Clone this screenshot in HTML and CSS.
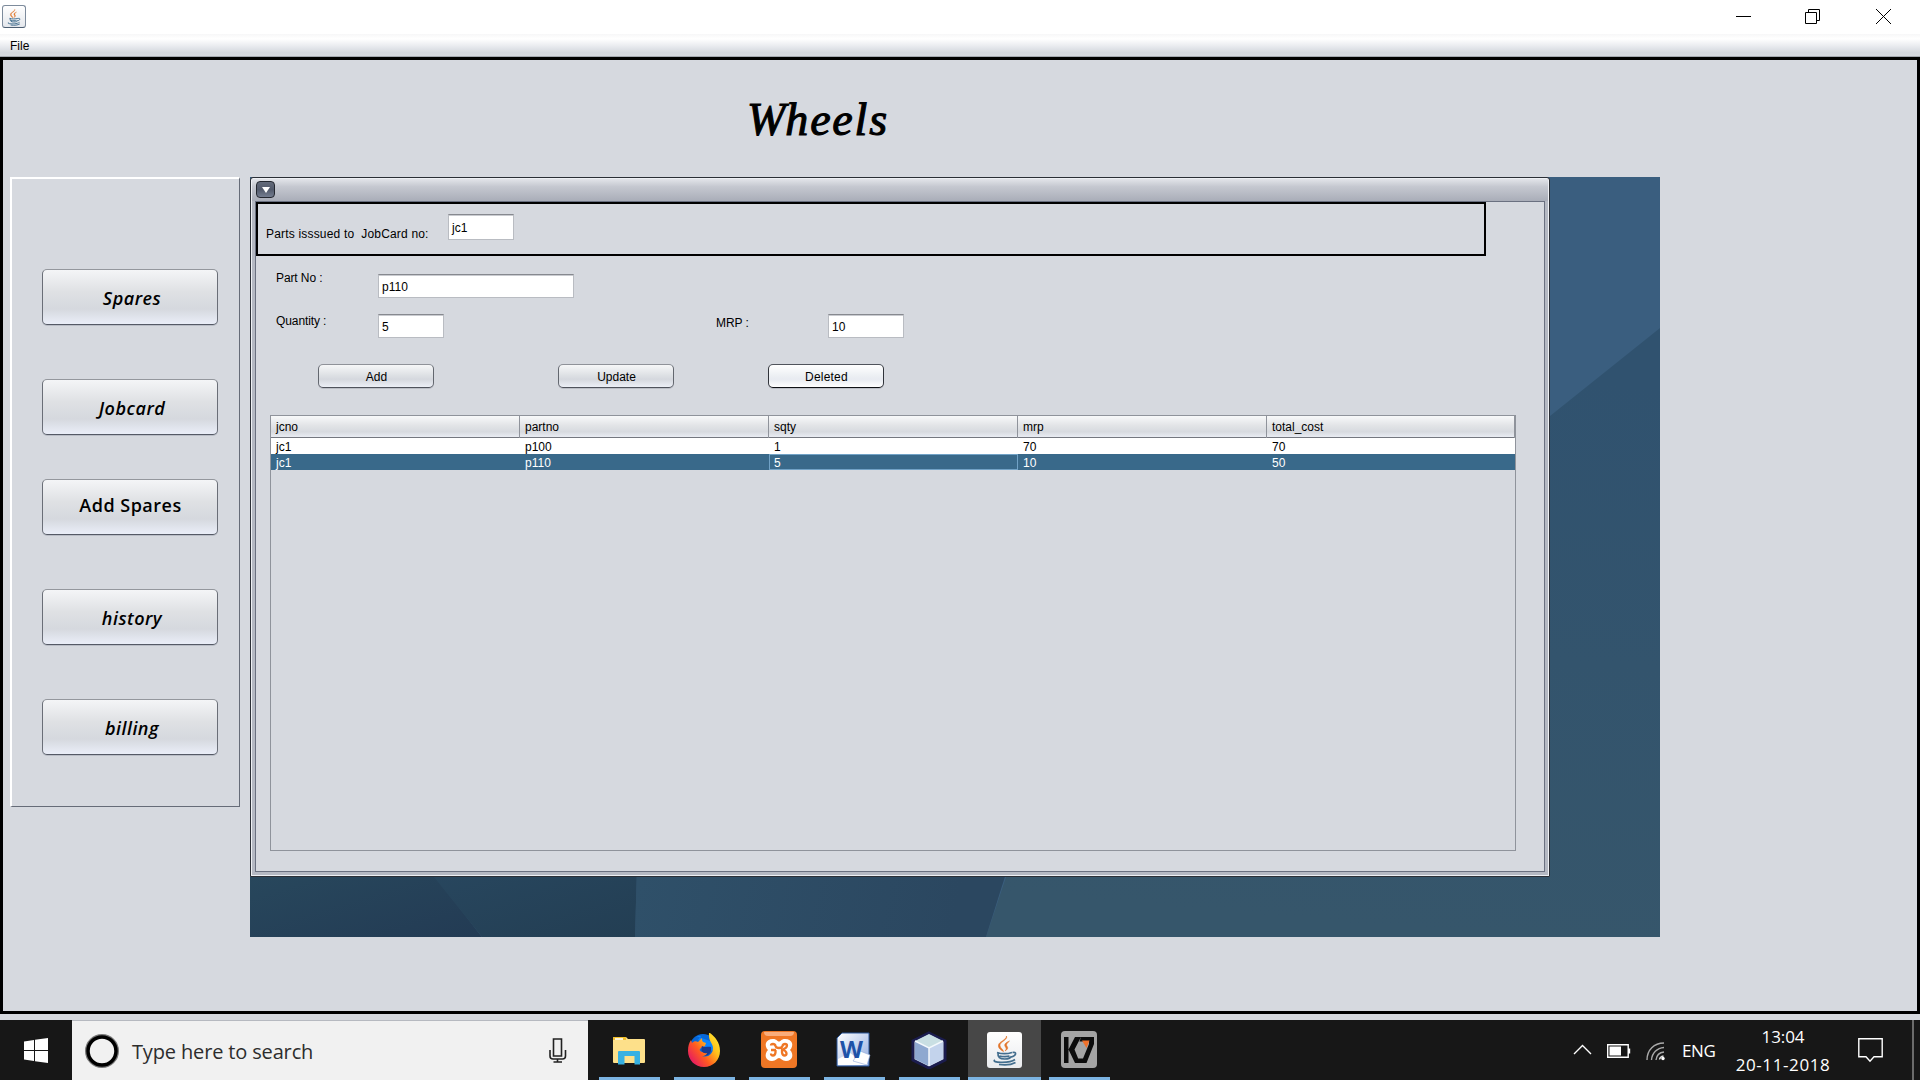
FILE: index.html
```html
<!DOCTYPE html>
<html lang="en">
<head>
<meta charset="utf-8">
<title>Wheels</title>
<link rel="stylesheet" href="styles.css">
</head>
<body>
<svg class="defs" width="0" height="0">
  <symbol id="java" viewBox="0 0 36 36">
    <path d="M19.500 4c1.500 4-7 6-6.500 9.500 0 2.500 3 3.500 3.500 6-3-1.500-5.500-3.500-5-6.500C12 9.500 19.500 8 19.500 4zM22.500 9c-5 2-5.500 4-4 6 1 1.500 1 2.500-.500 4 5-3 1.500-4.500 1.500-6 0-1.500 1.500-2.500 3-4z" fill="#e2762b" stroke="#e2762b" stroke-width=".6"/>
    <path d="M10 20.500c4 1.300 11 1.300 15 0M11 20.500c-.500 5 2 6.500 6.500 6.500s6.500-1 7-3M25.500 20.500c4-1 4.500 3-1 4.500M12.500 24c4 1 7 .8 10 .2M8 28c-5 2.500 14 4 20-.500M12 32.500c7 1 13 0 16.500-2" fill="none" stroke="#436e8e" stroke-width="1.700"/>
  </symbol>
</svg>

<header class="titlebar">
  <span class="appicon"><svg width="20" height="20"><use href="#java"/></svg></span>
  <div class="winbtns">
    <svg width="15" height="15" viewBox="0 0 15 15"><path d="M0 7.500h15"/></svg>
    <svg width="15" height="15" viewBox="0 0 15 15"><path d="M.5 3.500h11v11H.5zM3.500 3.500v-3h11v11h-3"/></svg>
    <svg width="15" height="15" viewBox="0 0 15 15"><path d="M0 0l15 15M15 0L0 15"/></svg>
  </div>
</header>
<nav class="menubar">File</nav>

<main class="app">
  <h1 class="brand"><span>W</span>heels</h1>
  <div class="workspace">
    <aside class="sidebar">
      <button class="nav">Spares</button>
      <button class="nav">Jobcard</button>
      <button class="nav upright">Add Spares</button>
      <button class="nav">history</button>
      <button class="nav">billing</button>
    </aside>
    <section class="desktop">
      <svg class="wall" width="1410" height="760" viewBox="0 0 1410 760">
        <defs>
          <linearGradient id="w1" x1="0" y1="0" x2="1" y2="1"><stop offset="0" stop-color="#28485d"/><stop offset="1" stop-color="#233b54"/></linearGradient>
          <linearGradient id="w2" x1="0" y1="0" x2="1" y2="1"><stop offset="0" stop-color="#28475f"/><stop offset="1" stop-color="#233e53"/></linearGradient>
          <linearGradient id="w3" gradientUnits="userSpaceOnUse" x1="390" y1="690" x2="700" y2="760"><stop offset="0" stop-color="#2f5069"/><stop offset="1" stop-color="#2b4760"/></linearGradient>
          <linearGradient id="w4" gradientUnits="userSpaceOnUse" x1="1300" y1="200" x2="1250" y2="760"><stop offset="0" stop-color="#30526f"/><stop offset="1" stop-color="#36566b"/></linearGradient>
        </defs>
        <path d="M0 0h1410v760H0z" fill="#3a5e7f"/>
        <path d="M1410 151v609H736l20-60 544-461z" fill="url(#w4)"/>
        <path d="M387 690h371l-22 70H385z" fill="url(#w3)"/>
        <path d="M0 690h178l54 70H0z" fill="url(#w1)"/>
        <path d="M176 690h211l-2 70H232z" fill="url(#w2)"/>
      </svg>
      <div class="frame">
        <div class="frame-title"><span class="sysmenu"></span></div>
        <div class="frame-body">
          <div class="jobcard">
            <label>Parts isssued to&nbsp; JobCard no:</label>
            <span class="field f-jc">jc1</span>
          </div>
          <div class="row r-part"><label>Part No :</label><span class="field f-part">p110</span></div>
          <div class="row r-qty">
            <label>Quantity :</label><span class="field f-qty">5</span>
            <label class="mrp">MRP :</label><span class="field f-mrp">10</span>
          </div>
          <div class="actions">
            <button class="btn">Add</button>
            <button class="btn">Update</button>
            <button class="btn hot">Deleted</button>
          </div>
          <div class="table">
            <div class="tr head"><span>jcno</span><span>partno</span><span>sqty</span><span>mrp</span><span>total_cost</span></div>
            <div class="tr"><span>jc1</span><span>p100</span><span>1</span><span>70</span><span>70</span></div>
            <div class="tr sel"><span>jc1</span><span>p110</span><span class="focus">5</span><span>10</span><span>50</span></div>
          </div>
        </div>
      </div>
    </section>
  </div>
</main>

<footer class="taskbar">
  <div class="start"><svg width="24" height="25" viewBox="0 0 24 25"><path d="M0 3.500L10 2v10H0zM11 1.800L24 0v12H11zM0 13h10v10L0 21.500zM11 13h13v12l-13-1.800z" fill="#fff"/></svg></div>
  <div class="search">
    <svg width="34" height="34" viewBox="0 0 34 34"><circle cx="17" cy="17" r="15" fill="none" stroke="#777" stroke-width="4"/><circle cx="17" cy="17" r="14" fill="none" stroke="#000" stroke-width="3.500"/></svg>
    <span>Type here to search</span>
    <svg class="mic" width="18" height="25" viewBox="0 0 18 25"><path d="M4.500 1h8v17h-8zM1 12v6q0 3 3 3h9.500q3 0 3-3v-6M8.500 21v3M4.500 24h8.500" fill="none" stroke="#222" stroke-width="1.600"/></svg>
  </div>
  <div class="tasks">
    <div class="task"><svg width="36" height="36" viewBox="0 0 36 36"><path d="M2 6q0-1 1-1h12l2 2h16q1 0 1 1v22q0 1-1 1H3q-1 0-1-1z" fill="#fde08a"/><path d="M2 6q0-1 1-1h12v3H2z" fill="#f2c12d"/><path d="M4 6.200h8v1.600H4z" fill="#fff"/><path d="M8 19h20q1 0 1 1v12.500h-5.500V24h-10v8.500H7V20q0-1 1-1z" fill="#37b1e2"/></svg></div>
    <div class="task"><svg width="36" height="36" viewBox="0 0 36 36"><defs><linearGradient id="fx" x1="1" y1="0" x2="0" y2=".8"><stop offset="0" stop-color="#fff13a"/><stop offset=".35" stop-color="#ffc21a"/><stop offset=".65" stop-color="#ff5b20"/><stop offset="1" stop-color="#e3126b"/></linearGradient></defs><circle cx="17" cy="15" r="13" fill="#0868d8"/><path d="M10 4l5 0-3 4 4 2-2 6 5 5 8-3V10z" fill="#0a84ff"/><path d="M24 1c5 4 10 9 10 18 0 9-7 16-16 16S2 28 2 19c0-5 1-8 3-11l1 3c2-2 4-2 6-1l4-4c0 3 0 4 4 5l-1 3-4 2c-3 2 0 4 2 4 3 0 4-2 6-1-1 3-3 5-7 5 6 2 11-2 11-8 0-5-5-7-4-15z" fill="url(#fx)"/><path d="M16 14c3 2 6 0 9 1 1 5-2 9-7 9 2-1 3-2 3-3-4 1-7-2-5-7z" fill="#163a8f"/></svg></div>
    <div class="task"><svg width="36" height="37" viewBox="0 0 36 37"><rect width="36" height="37" rx="4" fill="#ef7725"/><path d="M3 1h30q0 4-4 4H7Q3 5 3 1z" fill="#f9ad7c"/><path d="M12 8c4 0 4 2.500 6 2.500S20 8 24 8c8 0 9 7 5 11 4 4 3 11-4 11-4 0-5-3-7-3s-3 3-7 3c-7 0-8-7-4-11C3 15 4 8 12 8z" fill="#fff"/><path d="M10 14.500q0-1.500 2-1.500t2.500 2q.5 2 3.500 2t3.500-2q.5-2 2.500-2t2 1.500q0 2.500-4.500 4 4 1.500 4 4 0 2-2 2t-2.500-3v-4M10 19h5M14.500 19v2.500q-.5 3-2.500 3t-2-2" fill="none" stroke="#ef7725" stroke-width="2.300" stroke-linejoin="round"/></svg></div>
    <div class="task"><svg width="36" height="36" viewBox="0 0 36 36"><defs><linearGradient id="wd" x1="0" y1="0" x2="1" y2="1"><stop offset="0" stop-color="#fff"/><stop offset="1" stop-color="#8fabe0"/></linearGradient></defs><path d="M6 1h27v33H1V6z" fill="url(#wd)" stroke="#2b579a"/><path d="M2 27l12-6 18 12H2z" fill="#fff"/><path d="M24 19l10 4-3 10-14-4z" fill="#fff" stroke="#8ea7d8" stroke-width=".6"/><text x="4" y="26" class="wordmark" textLength="23" lengthAdjust="spacingAndGlyphs">W</text></svg></div>
    <div class="task"><svg width="36" height="38" viewBox="0 0 36 38"><path d="M18 2l16 8v19l-16 8-16-8V10z" fill="#dbe7f3" stroke="#1b1c4e" stroke-width="3"/><path d="M18 3l14 7-14 7-14-7z" fill="#c9dfe3"/><path d="M4 10l14 7v18L4 28z" fill="#8ea8d0"/><path d="M32 10l-14 7v18l14-7z" fill="#c3d3ec"/><path d="M4 10l14 7 14-7M18 17v18" fill="none" stroke="#f3f8fc" stroke-width="1.500"/></svg></div>
    <div class="task active"><span class="tile"><svg width="36" height="36"><use href="#java"/></svg></span></div>
    <div class="task k7"><svg width="36" height="37" viewBox="0 0 36 37"><rect width="36" height="37" rx="4" fill="#a4a4a4"/><path d="M3 6h4.500v26H3zM14 6h6l-6.500 12.500L19 32h-5L7.500 18.500zM20 6h13v7l-7.500 19H16l-2-4.500h8L28 13v-2.500h-9.500z" fill="#0c0c0c"/><path d="M21 9.500h7.500L25.500 17z" fill="#f0702a"/></svg></div>
  </div>
  <div class="tray">
    <svg class="chev" width="19" height="11" viewBox="0 0 19 11"><path d="M1 10l8.500-8.500L18 10"/></svg>
    <svg class="bat" width="24" height="14" viewBox="0 0 24 14"><path d="M.7.700h20.500v12.500H.7zM22.500 4.500v5"/><path d="M2.500 2.500h11.500v9H2.500z" fill="#fff" stroke="none"/></svg>
    <svg class="wifi" width="20" height="19" viewBox="0 0 20 19"><path d="M1 18C1 8 8 1 18 1M5.500 18C6 11 11 6 18 5.500M10 18c.5-4.500 3.500-7.500 8-8" stroke="#aaa"/><path d="M13.500 17.500c.3-1.700 1.500-3 4-3.500" stroke="#ddd"/><circle cx="17" cy="16.500" r="1.700" fill="#fff" stroke="none"/></svg>
    <span class="lang">ENG</span>
    <div class="clock"><span>13:04</span><span class="date">20-11-2018</span></div>
    <svg class="note" width="25" height="25" viewBox="0 0 25 25"><path d="M.8.800h23.400v18h-8.200l-4 4.500-4-4.500H.8z"/></svg>
    <i class="peek"></i>
  </div>
</footer>
</body>
</html>
```
FILE: styles.css
```css
* { box-sizing: border-box; }
body {
  margin: 0; width: 1920px; height: 1080px; overflow: hidden;
  display: flex; flex-direction: column;
  background: #d6d9df; color: #000;
  font: 12px/16px "Liberation Sans", Arial, sans-serif;
}
.defs { position: absolute; }
button { font: inherit; color: inherit; padding: 0; }

.titlebar { height: 34px; background: #fff; display: flex; justify-content: space-between; padding: 5px 29px 0 2px; }
.appicon {
  width: 24px; height: 23px; border: 1px solid #7d8b9c; border-bottom-color: #4c5e72; border-radius: 3px;
  background: linear-gradient(#fff, #e4e7ec); display: grid; place-items: center;
}
.winbtns { display: flex; gap: 56px; padding-top: 4px; }
.winbtns svg { fill: none; stroke: #000; stroke-width: 1; }
.winbtns svg:first-child { margin-right: -2px; }
.menubar {
  height: 23px; padding: 4px 10px; border-bottom: 1px solid #a3a8b0;
  background: linear-gradient(#f7f7f8, #fff 22%, #e9ebef 55%, #d3d7de 85%, #d6d9df);
}

.app { height: 957px; border: 3px solid #000; padding: 0 0 0 7px; }
.brand {
  margin: 0 0 0 737px; height: 117px; padding-top: 35px;
  font: italic normal 46px/50px "Monotype Corsiva", "Z003", "Liberation Serif", serif;
  letter-spacing: 1.800px; white-space: nowrap;
  -webkit-text-stroke: 1.1px #000;
}
.brand span { letter-spacing: 0; }
.workspace { display: flex; gap: 10px; align-items: flex-start; }

.sidebar {
  width: 230px; height: 630px; padding: 90px 0 0 30px;
  border: 2px solid #fff; border-right: 1px solid #666c78; border-bottom: 1px solid #666c78;
  display: flex; flex-direction: column; gap: 54px;
}
.nav {
  width: 176px; height: 56px; flex: none;
  border: 1px solid #6a6e77; border-top-color: #94979d; border-bottom-color: #555a66; border-radius: 5px;
  background: linear-gradient(#f4f5f7, #dfe1e4 40%, #d5d8de 72%, #eaeef8);
  box-shadow: 0 1px 0 #b9bdc6;
  font: italic 600 18px/24px "Open Sans", "Noto Sans", sans-serif; padding: 2px 0 0 4px;
  letter-spacing: .5px;
}
.nav.upright { font-style: normal; margin: -10px 0 0; padding: 0 0 4px 1px; letter-spacing: .5px; }

.desktop { width: 1410px; height: 760px; position: relative; }
.wall { position: absolute; inset: 0; }
.frame {
  position: relative; width: 1300px; height: 700px; border: 1px solid #2b2f36; border-radius: 3px 3px 1px 1px;
  background: #b5b9c3; box-shadow: inset 0 0 0 1px #eef0f4; padding: 1px 4px 5px 5px;
}
.frame-title {
  height: 22px; margin: 0 -3px 0 -4px; padding: 2px 0 0 4px;
  background: linear-gradient(#e2e4e9, #c5c8d0 35%, #a9adb8);
}
.sysmenu {
  display: grid; place-items: center; width: 19px; height: 17px; border: 1px solid #23272f; border-radius: 4px;
  background: linear-gradient(#646b7b, #525a6b 50%, #747d90);
}
.sysmenu::after { content: ""; border: 4px solid transparent; border-top: 6px solid #fff; border-bottom: 0; }
.frame-body {
  height: 671px; margin-left: -1px; border: 1px solid #6a7080; background: #d6d9df;
}
.jobcard {
  width: 1230px; height: 54px; border: 2px solid #000; display: flex; padding: 10px 0 0 8px;
}
.jobcard label { width: 182px; padding-top: 12px; letter-spacing: .18px; }
.field {
  height: 24px; background: #fff; border: 1px solid #b9bcc2; border-top: 1px solid #86898f;
  box-shadow: inset 0 1px 0 #c9cbd0; padding: 4px 3px 0; flex: none;
}
.f-jc { width: 66px; height: 26px; padding-top: 5px; }
.f-part { width: 196px; }
.f-qty { width: 66px; }
.f-mrp { width: 76px; }
.row { display: flex; height: 24px; padding-left: 20px; }
.row label { width: 102px; margin-top: -4px; letter-spacing: -.1px; }
.r-part { margin-top: 18px; }
.r-qty { margin-top: 16px; }
.r-qty label { margin-top: -1px; }
.row .mrp { width: 112px; margin: 1px 0 0 272px; }
.actions { display: flex; margin: 26px 0 0 62px; }
.btn {
  width: 116px; height: 24px; margin-right: 124px; padding-top: 1px; padding-left: 1px;
  border: 1px solid #63676f; border-top-color: #8f9299; border-bottom-color: #4f535c; border-radius: 5px;
  background: linear-gradient(#f6f7f8, #dcdfe3 50%, #d5d8de 65%, #eceff6);
  box-shadow: 0 1px 0 #bbbec6;
}
.btn.hot { margin-left: -30px; letter-spacing: .2px; background: linear-gradient(#fff, #eceff3 50%, #e8ebf1 65%, #fff); border-color: #50545c #30333a #101216; }

.table { margin: 27px 0 0 14px; width: 1246px; height: 436px; border: 1px solid #8f939b; }
.tr { display: grid; grid-template-columns: 249px 249px 249px 249px 1fr; height: 16px; background: #fff; line-height: 18px; }
.tr span { padding-left: 5px; }
.head { height: 22px; line-height: 22px; border-bottom: 1px solid #74777f; background: linear-gradient(#f8f9fa, #e2e4e7 45%, #d7dadf 75%, #e9ecf3); }
.head span { border-right: 1px solid #8f939b; }
.sel { background: #39698a; color: #fff; }
.tr .focus { border: 1px solid #71a2c6; padding-left: 4px; line-height: 16px; height: 16px; }

.taskbar { margin-top: 6px; height: 60px; background: #171717; display: flex; font-family: "Open Sans", "Noto Sans", sans-serif; color: #fff; }
.start { width: 72px; display: grid; place-items: center; }
.search { width: 516px; background: #f1f1f1; border-top: 1px solid #b6b9c0; display: flex; align-items: center; padding: 0 21px 0 13px; color: #2d2d2d; }
.search span { font-size: 20px; line-height: 28px; margin-left: 13px; letter-spacing: -.15px; padding-top: 2px; }
.mic { margin-left: auto; }
.tasks { display: flex; padding-left: 11px; gap: 14px; }
.task { width: 61px; border-bottom: 3px solid #7cb4e2; display: grid; place-items: center; padding: 2px 2px 0 0; }
.active { width: 73px; margin: 0 -6px; background: #474747; padding-right: 0; }
.tile { width: 35px; height: 36px; border-radius: 3px; background: linear-gradient(#fff, #e9ebee); display: grid; place-items: center; }
.tray { margin-left: auto; display: flex; align-items: flex-start; }
.tray svg { fill: none; stroke: #fff; stroke-width: 1.400; }
.chev { margin: 24px 15px 0 0; }
.bat { margin: 24px 15px 0 0; }
.wifi { margin: 22px 16px 0 0; }
.lang { font-size: 17px; line-height: 24px; margin-top: 19px; width: 54px; letter-spacing: -.4px; }
.clock { width: 94px; display: flex; flex-direction: column; align-items: center; font-size: 17px; line-height: 28px; padding-top: 3px; letter-spacing: -.1px; white-space: nowrap; }
.date { letter-spacing: .6px; }
.note { margin: 18px 29px 0 28px; }
.peek { width: 8px; height: 60px; border-left: 2px solid #6b6b6b; }
.wordmark { font: bold 24px "Open Sans", sans-serif; fill: #1e52a8; stroke: none; }
```
